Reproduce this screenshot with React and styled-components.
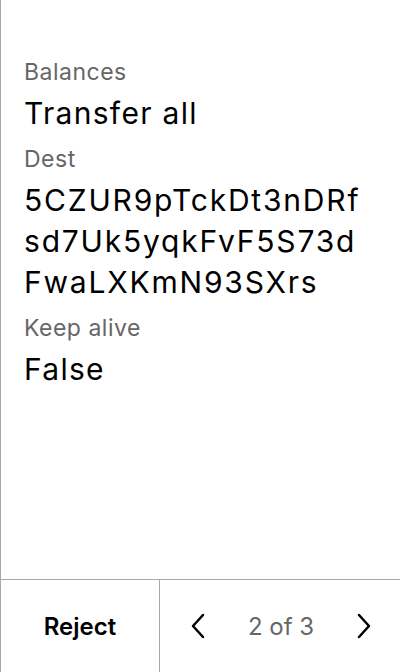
import React from "react";
import styled, { createGlobalStyle } from "styled-components";

const GlobalStyle = createGlobalStyle`
  html, body {
    margin: 0;
    padding: 0;
    background: #fff;
  }
  body {
    font-family: Inter, "Noto Sans", sans-serif;
    -webkit-font-smoothing: antialiased;
  }
`;

const Screen = styled.div`
  display: flex;
  flex-direction: column;
  width: 400px;
  height: 672px;
  box-sizing: border-box;
  border-left: 1px solid #a8a8a8;
`;

const Content = styled.div`
  flex: 1;
  padding: 60px 0 0 23px;
  display: flex;
  flex-direction: column;
`;

const Field = styled.div`
  width: 350px;
  margin-bottom: 13px;
`;

const Label = styled.div`
  font-size: 23px;
  line-height: 24px;
  letter-spacing: 0.5px;
  color: #666;
`;

const Value = styled.div`
  font-size: 30px;
  line-height: 41px;
  letter-spacing: ${(p) => (p.$mono ? "1.8px" : "1.3px")};
  color: #000;
  margin-top: 9px;
  word-break: break-all;
`;

const Footer = styled.div`
  height: 92px;
  display: flex;
  border-top: 1px solid #a8a8a8;
`;

const RejectButton = styled.button`
  width: 159px;
  border: none;
  border-right: 1px solid #a8a8a8;
  background: transparent;
  font-family: inherit;
  font-size: 24px;
  font-weight: 600;
  color: #000;
  padding: 0;
`;

const Pager = styled.div`
  flex: 1;
  display: flex;
  align-items: center;
  justify-content: space-between;
  padding: 0 26px 0 28px;
`;

const PageText = styled.span`
  font-size: 24px;
  color: #666;
`;

const Chevron = ({ dir }) => (
  <svg width="24" height="26" viewBox="0 0 24 26" fill="none" stroke="#000" strokeWidth="2.5" strokeLinecap="round" strokeLinejoin="round">
    {dir === "left" ? <path d="M15 2 5 13l10 11" /> : <path d="M9 2l10 11L9 24" />}
  </svg>
);

const fields = [
  { label: "Balances", value: "Transfer all" },
  { label: "Dest", value: "5CZUR9pTckDt3nDRfsd7Uk5yqkFvF5S73dFwaLXKmN93SXrs", address: true },
  { label: "Keep alive", value: "False" },
];

export default function App() {
  return (
    <>
      <GlobalStyle />
      <Screen>
        <Content>
          {fields.map((f) => (
            <Field key={f.label}>
              <Label>{f.label}</Label>
              <Value $mono={f.address}>{f.value}</Value>
            </Field>
          ))}
        </Content>
        <Footer>
          <RejectButton>Reject</RejectButton>
          <Pager>
            <Chevron dir="left" />
            <PageText>2 of 3</PageText>
            <Chevron dir="right" />
          </Pager>
        </Footer>
      </Screen>
    </>
  );
}
